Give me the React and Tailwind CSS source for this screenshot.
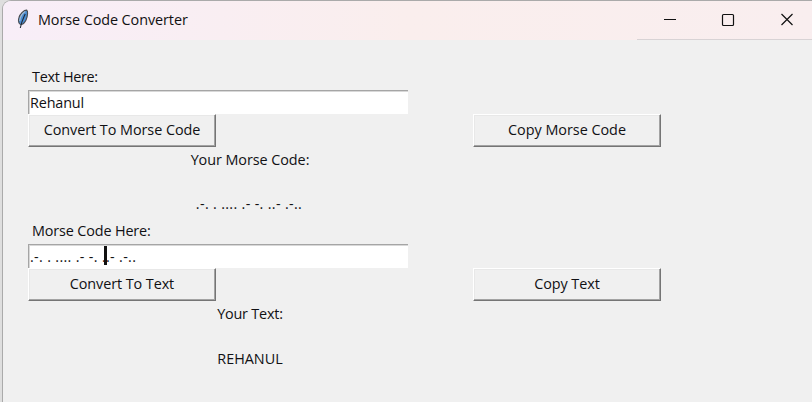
import React from "react";

function Feather() {
  return (
    <svg className="h-[20px] w-[14px]" viewBox="0 0 14 20" fill="none">
      <path d="M10.8 1.2C12 2 11.8 7 10 11C8.800 13.500 7 15.500 4.800 15.500C2.800 15.500 2 11.500 3 8.500C4 5 8 1 10.800 1.200Z" fill="#4b8fd6" stroke="#4a4e54" strokeWidth="1.200" />
      <path d="M9.300 2.500C6.500 4 4.200 7.500 3.700 12" stroke="#a9bdd0" strokeWidth="1.100" />
      <path d="M9.200 5C7.500 9 5.500 12.500 4.300 19" stroke="#202b39" strokeWidth="1.100" />
    </svg>
  );
}

function TitleBar() {
  return (
    <header className="flex h-[39px] items-center bg-gradient-to-r from-[#f8eef8] via-[#faeeed] to-[#f9eeef]">
      <div className="ml-[13px] mt-[-3px] flex w-[22px]">
        <Feather />
      </div>
      <h1 className="mt-[-1px] text-[14.400px] leading-[20px] tracking-[-0.080px] text-[#111]">Morse Code Converter</h1>
      <div className="ml-auto flex h-full w-[175px] items-center border-b border-[#d8d3d5]">
        <svg className="h-[38px] w-[175px]" viewBox="0 0 175 38" fill="none" stroke="#111" strokeWidth="1.200">
          <path d="M27 18.500H39" />
          <rect x="85.500" y="13.500" width="11" height="11" rx="1" />
          <path d="M144.500 13L155.500 24M155.500 13L144.500 24" />
        </svg>
      </div>
    </header>
  );
}

function Button({ children, tracking }) {
  return (
    <button className="flex h-[33px] w-[188px] items-center justify-center border border-t-white border-l-white border-r-[#757575] border-b-[#757575] bg-[#f0f0f0] pb-px shadow-[inset_-1px_-1px_0_#a3a3a3,inset_1px_1px_0_#e8e8e8]">
      <span className={tracking}>{children}</span>
    </button>
  );
}

function Entry({ children }) {
  return (
    <div className="relative flex h-[24px] w-[380px] items-center border-t border-l border-[#a5a5a5] bg-white pl-[1px] shadow-[inset_1px_1px_0_#d8d8d8]">
      {children}
    </div>
  );
}

export default function App() {
  return (
    <main className="h-[402px] w-[812px] overflow-hidden bg-[#dedede] font-['Open_Sans','Noto_Sans',sans-serif]">
      <div className="ml-[2px] flex h-[410px] w-[820px] flex-col overflow-hidden rounded-tl-[9px] border-t border-l border-[#aaa] bg-[#f0f0f0]">
        <div className="w-[809px] shrink-0">
          <TitleBar />
        </div>
        <div className="flex flex-col pl-[25px] text-[14.400px] leading-[20px] text-[#111114]">
          <section className="flex h-[153px] flex-col pt-[27px]">
            <div className="h-[23px] pl-1 tracking-[-0.300px]">Text Here:</div>
            <Entry><span className="tracking-[-0.150px]">Rehanul</span></Entry>
            <div className="flex gap-[257px]">
              <Button tracking="tracking-[-0.050px]">Convert To Morse Code</Button>
              <Button tracking="tracking-[-0.020px]">Copy Morse Code</Button>
            </div>
            <div className="flex w-[444px] justify-center pt-[3px]">
              <span className="tracking-[-0.060px]">Your Morse Code:</span>
            </div>
          </section>
          <div className="flex w-[442px] justify-center pt-[1px]">
            <span className="tracking-[0.310px]">.-. . .... .- -. ..- .-..</span>
          </div>
          <section className="flex flex-col pt-[7px]">
            <div className="h-[23px] pl-1 tracking-[-0.140px]">Morse Code Here:</div>
            <Entry>
              <span className="tracking-[0.310px]">.-. . .... .- -. ..- .-..</span>
              <i className="absolute left-[75px] top-px h-[19px] w-[3px] bg-[#111]" />
            </Entry>
            <div className="flex gap-[257px]">
              <Button tracking="tracking-[-0.080px]">Convert To Text</Button>
              <Button tracking="tracking-[-0.080px]">Copy Text</Button>
            </div>
            <div className="flex w-[444px] flex-col items-center gap-[25px] pt-[3px]">
              <span className="tracking-[-0.200px]">Your Text:</span>
              <span>REHANUL</span>
            </div>
          </section>
        </div>
      </div>
    </main>
  );
}
